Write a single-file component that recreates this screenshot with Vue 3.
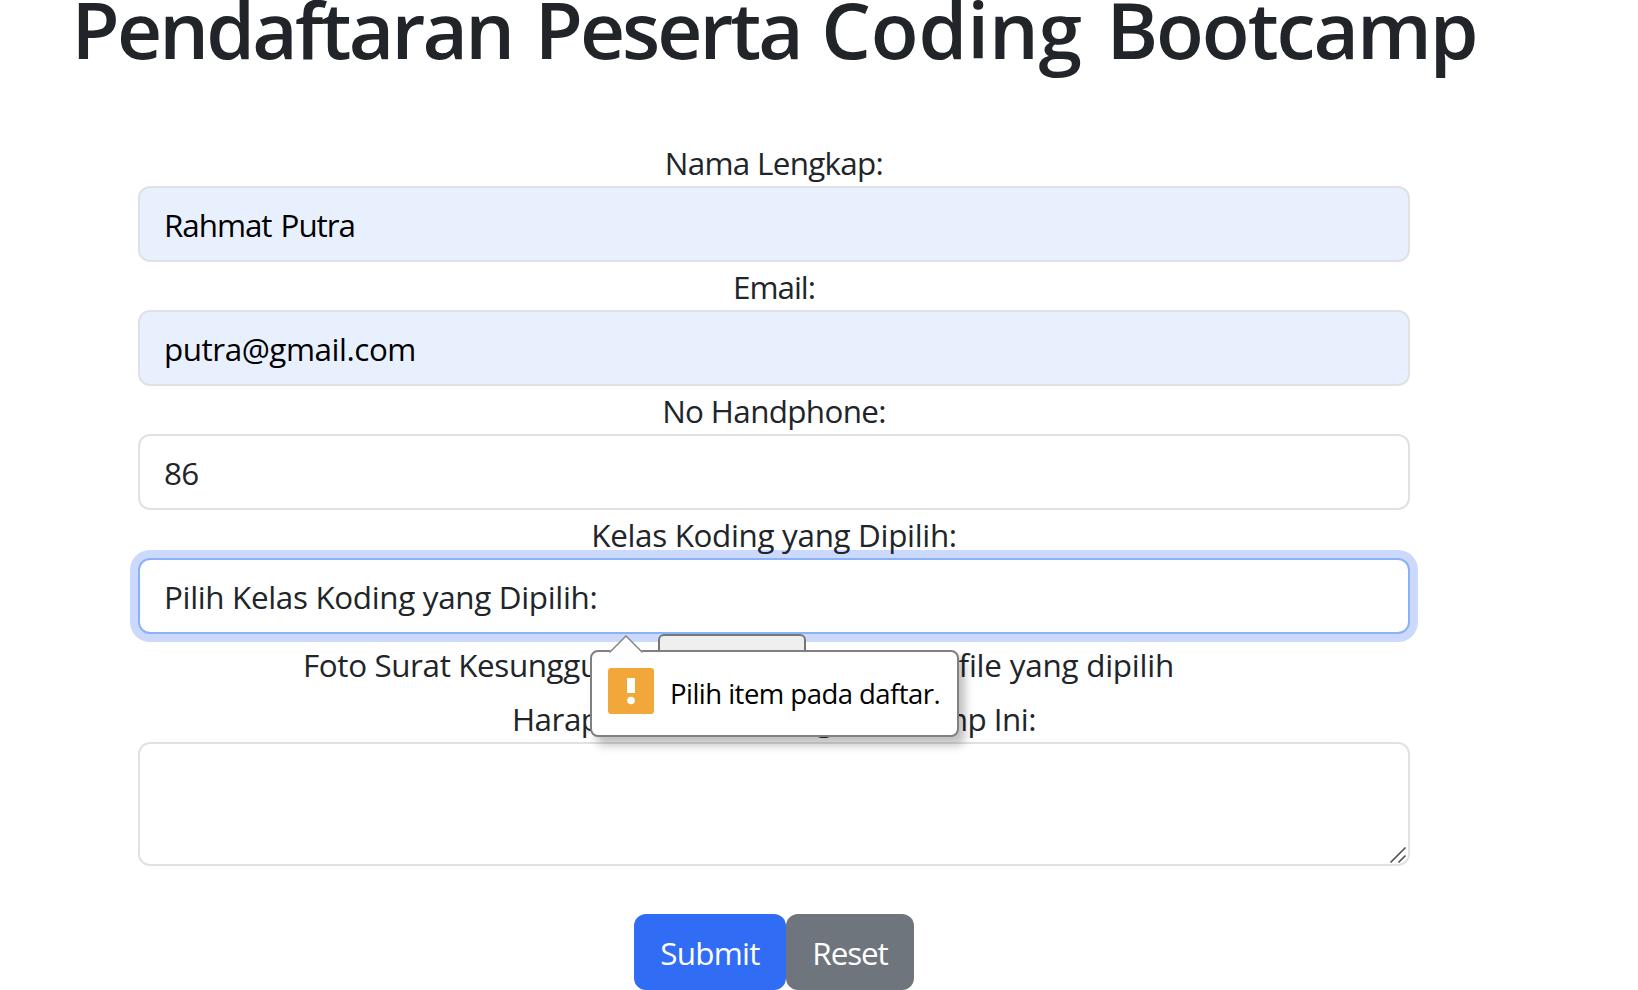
<script setup>
import { ref } from 'vue'

const nama = ref('Rahmat Putra')
const email = ref('putra@gmail.com')
const telepon = ref('86')
const kelas = ref('Pilih Kelas Koding yang Dipilih:')
const harapan = ref('')
</script>

<template>
  <main class="page">
    <h1 class="title">
      <span class="t1">Pendaftaran</span> <span class="t2">Peserta</span> <span class="t3">Coding</span> <span class="t4">Bootcamp</span>
    </h1>
    <form class="form" @submit.prevent>
      <label class="label l-nama" for="nama">Nama Lengkap:</label>
      <input id="nama" v-model="nama" class="control filled c-nama" />
      <label class="label l-email" for="email">Email:</label>
      <input id="email" v-model="email" class="control filled c-email" />
      <label class="label l-hp" for="hp">No Handphone:</label>
      <input id="hp" v-model="telepon" class="control c-hp" />
      <label class="label l-kelas" for="kelas">Kelas Koding yang Dipilih:</label>
      <div class="select-wrap">
        <input id="kelas" v-model="kelas" class="control focused c-kelas" readonly />
        <div class="bubble">
          <svg class="arrow" width="34" height="19" viewBox="0 0 34 19">
            <path d="M0 19V17L17 1L34 17V19Z" fill="#fff" />
            <path d="M0.5 17.5L17 1L33.5 17.5" fill="none" stroke="#808080" stroke-width="1.4" />
          </svg>
          <svg class="warn" width="46" height="46" viewBox="0 0 46 46">
            <rect width="46" height="46" rx="3" fill="#f2a73a" />
            <rect x="19" y="10" width="8" height="15" fill="#fff" />
            <circle cx="23" cy="32.5" r="3.8" fill="#fff" />
          </svg>
          <span class="bubble-text">Pilih item pada daftar.</span>
        </div>
      </div>
      <div class="file-row">
        <span class="file-label">Foto Surat Kesungguhan:</span>
        <span class="file-button"></span>
        <span class="file-name">file yang dipilih</span>
      </div>
      <label class="label l-harapan" for="harapan">Harapan untuk Coding Bootcamp Ini:</label>
      <div class="area-wrap">
        <textarea id="harapan" v-model="harapan" class="area"></textarea>
        <svg class="grip" width="18" height="18" viewBox="0 0 18 18" fill="none" stroke="#555" stroke-width="1.7">
          <path d="M1.5 16.5L16.5 1.5M9.5 16.5L16.5 9.5" />
        </svg>
      </div>
      <div class="actions">
        <button class="btn submit" type="submit">Submit</button>
        <button class="btn reset" type="reset">Reset</button>
      </div>
    </form>
  </main>
</template>

<style>
html,
body {
  margin: 0;
  background: #fff;
  overflow: hidden;
}
</style>

<style scoped>
.page {
  box-sizing: border-box;
  width: 1548px;
  height: 990px;
  overflow: hidden;
  font-family: "Open Sans", "Noto Sans", sans-serif;
  font-size: 31.4px;
  line-height: 48px;
  color: #212529;
}
.page * {
  box-sizing: border-box;
}
.title {
  margin: 0;
  height: 138px;
  font-size: 78.4px;
  font-weight: 600;
  line-height: 58px;
  letter-spacing: -1.78px;
  text-align: center;
  white-space: nowrap;
}
.t1 {
  margin-right: 4px;
  letter-spacing: -2.8px;
}
.t2 {
  margin-right: 2px;
  letter-spacing: -3px;
}
.t3 {
  margin-right: 6px;
  letter-spacing: -0.15px;
}
.t4 {
  letter-spacing: -2.05px;
}
.form {
  display: flex;
  flex-direction: column;
  width: 1272px;
  margin: 0 auto;
}
.label {
  position: relative;
  z-index: 1;
  height: 48px;
  padding-top: 1px;
  text-align: center;
  white-space: nowrap;
}
.l-nama {
  letter-spacing: -0.7px;
}
.l-email {
  letter-spacing: -1px;
}
.l-hp {
  letter-spacing: -0.65px;
}
.l-kelas {
  letter-spacing: -0.32px;
}
.l-harapan {
  letter-spacing: -0.5px;
}
.control {
  display: block;
  width: 100%;
  height: 76px;
  padding: 0 24px;
  border: 2px solid #dee2e6;
  border-radius: 12px;
  outline: none;
  background: #fff;
  color: #212529;
  font: inherit;
}
.filled {
  background: #e8f0fe;
  color: #000;
}
.focused {
  border-color: #8bb1f9;
  box-shadow: 0 0 0 8px #cbdafc;
}
.c-nama {
  letter-spacing: -1.05px;
  word-spacing: 2px;
}
.c-email {
  letter-spacing: -0.45px;
}
.c-hp {
  letter-spacing: -0.8px;
}
.c-kelas {
  letter-spacing: -0.33px;
}
.select-wrap,
.area-wrap {
  position: relative;
}
.bubble {
  position: absolute;
  z-index: 2;
  left: 452px;
  top: 92px;
  display: flex;
  align-items: flex-start;
  width: 369px;
  height: 87px;
  padding: 16px 0 0 16px;
  border: 2px solid #808080;
  border-radius: 8px;
  background: #fff;
  box-shadow: 6px 8px 10px rgba(0, 0, 0, 0.25);
}
.arrow {
  position: absolute;
  left: 17px;
  top: -17px;
}
.bubble-text {
  margin-left: 16px;
  color: #000;
  font-size: 27.5px;
  line-height: 52px;
  letter-spacing: -0.53px;
  white-space: nowrap;
}
.file-row {
  position: relative;
  display: flex;
  height: 60px;
  padding-left: 165px;
  line-height: 60px;
  white-space: nowrap;
}
.file-label {
  width: 355px;
  padding-top: 1px;
  letter-spacing: -0.38px;
}
.file-button {
  width: 148px;
  height: 60px;
  border: 2px solid #767676;
  border-radius: 6px;
  background: #efefef;
}
.file-name {
  width: 368px;
  padding-top: 1px;
  letter-spacing: -0.22px;
  text-align: right;
}
.area {
  display: block;
  width: 100%;
  height: 124px;
  padding: 12px 24px;
  border: 2px solid #dee2e6;
  border-radius: 12px;
  outline: none;
  resize: none;
  font: inherit;
}
.grip {
  position: absolute;
  right: 3px;
  bottom: 2px;
}
.actions {
  display: flex;
  justify-content: center;
  margin-top: 48px;
}
.btn {
  height: 76px;
  padding: 2px 0 0;
  border: 0;
  border-radius: 12px;
  color: #fff;
  font: inherit;
}
.submit {
  width: 152px;
  background: #316cf4;
  letter-spacing: -0.75px;
}
.reset {
  width: 128px;
  background: #6e757c;
  letter-spacing: -1.1px;
}
</style>
